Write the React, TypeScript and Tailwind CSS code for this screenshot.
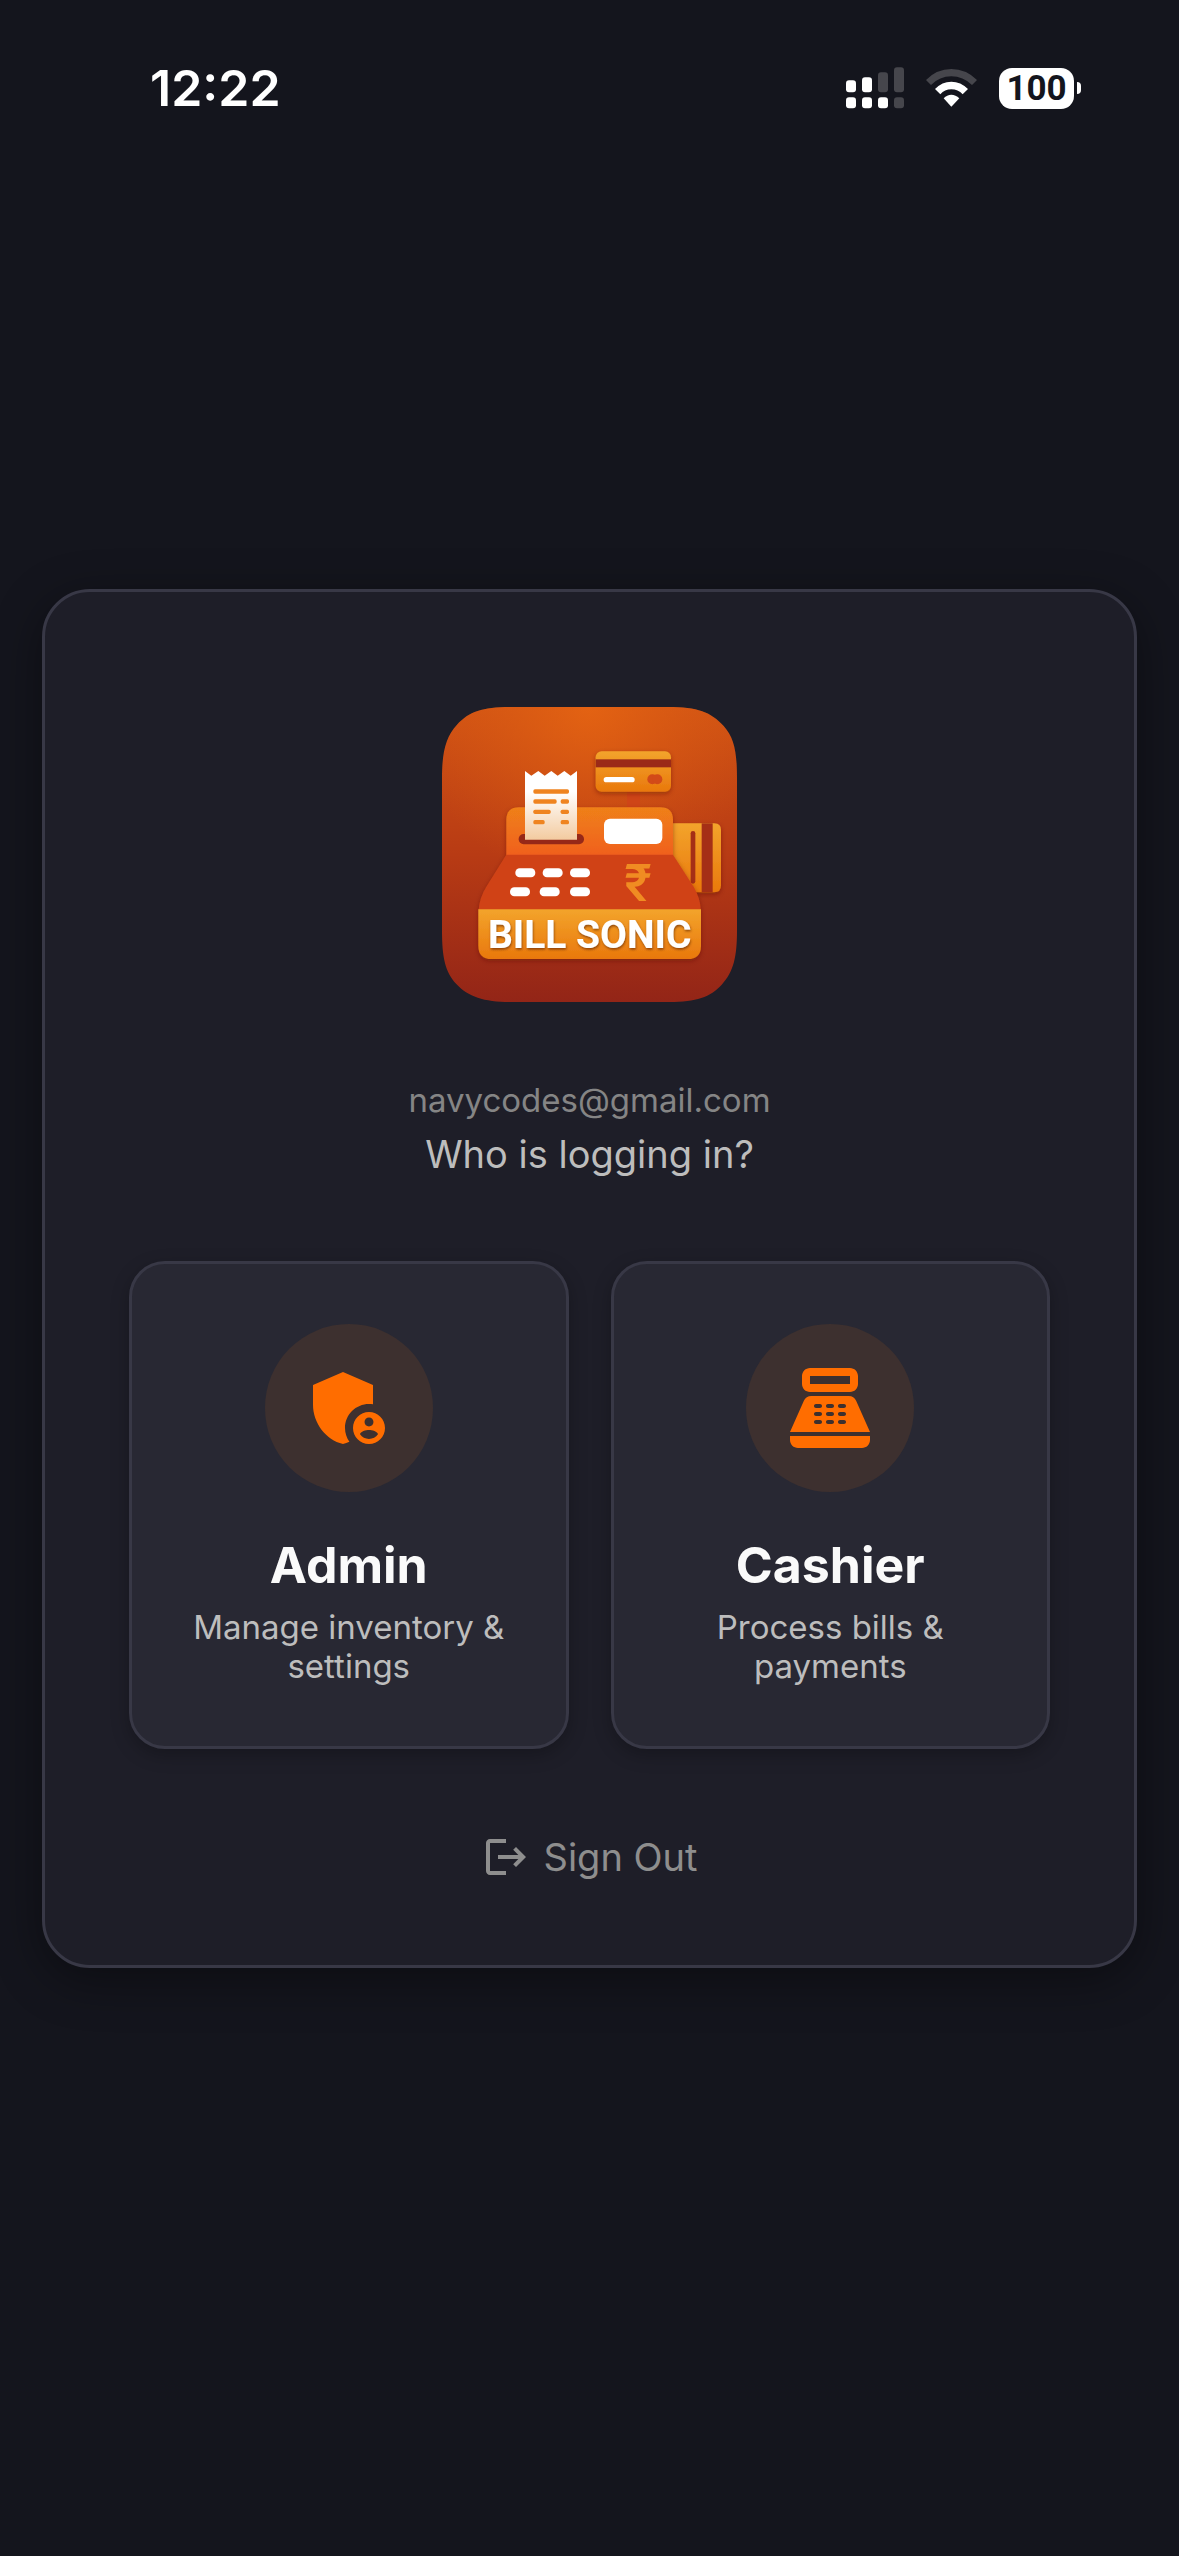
import type { IconType } from "react-icons";
import { MdAdminPanelSettings, MdLogout, MdPointOfSale } from "react-icons/md";

type Role = {
    id: string
    title: string
    description: string
    icon: IconType
}

const roles: Role[] = [
    { id: "admin", title: "Admin", description: "Manage inventory & settings", icon: MdAdminPanelSettings },
    { id: "cashier", title: "Cashier", description: "Process bills & payments", icon: MdPointOfSale },
]

const SignalIcon = () => (
    <svg width="58" height="42" viewBox="78 80 174 126" fill="#ffffff" aria-hidden="true">
        <rect x="78" y="120" width="30" height="36" rx="9" />
        <rect x="126" y="111" width="30" height="45" rx="9" />
        <rect x="174" y="96" width="30" height="60" rx="9" fill="#46464c" />
        <rect x="222" y="81" width="30" height="75" rx="9" fill="#46464c" />
        <rect x="78" y="171" width="30" height="33" rx="9" />
        <rect x="126" y="171" width="30" height="33" rx="9" />
        <rect x="174" y="171" width="30" height="33" rx="9" />
        <rect x="222" y="171" width="30" height="33" rx="9" fill="#46464c" />
    </svg>
)

const WifiIcon = () => (
    <svg width="51" height="42" viewBox="318 80 153 126" fill="#ffffff" aria-hidden="true">
        <path fill="#46464c" d="M318 119 Q350 86 394 86 Q438 86 471 119 L456 134 Q429 108 394 108 Q359 108 333 134 Z" />
        <path d="M345 146 Q366 124 394 124 Q422 124 444 146 L428 162 Q414 147 394 147 Q374 147 361 162 Z" />
        <path d="M371 174 Q381 163 394 163 Q407 163 418 174 L394 199 Z" />
    </svg>
)

const StatusBar = () => (
    <header className="flex h-44 items-center justify-between pl-[150px] pr-[98px]">
        <time className="text-[50px] leading-none font-semibold text-white">12:22</time>
        <div className="flex items-center gap-[22px]">
            <SignalIcon />
            <WifiIcon />
            <div className="flex items-center gap-[3px]">
                <span className="flex h-[41px] w-[75px] items-center justify-center rounded-[13px] bg-white font-['Roboto',sans-serif] text-[35px] leading-none font-bold text-[#14151d]">100</span>
                <span className="h-3 w-1 rounded-r-full bg-white"></span>
            </div>
        </div>
    </header>
)

const Logo = () => (
    <svg className="size-[295px]" viewBox="33 35 885 885" role="img" aria-label="Bill Sonic">
        <defs>
            <path id="shape" d="M240 35 H710 C800 35 840 50 878 92 C910 128 918 170 918 250 V705 C918 785 908 830 872 868 C838 905 795 920 715 920 H240 C160 920 112 905 76 866 C42 830 33 785 33 705 V250 C33 170 44 125 78 88 C115 48 155 35 240 35 Z" />
            <linearGradient id="tile" x1="0" y1="0" x2="0" y2="1">
                <stop offset="0" stopColor="#d25414" />
                <stop offset="0.5" stopColor="#b83b14" />
                <stop offset="1" stopColor="#932517" />
            </linearGradient>
            <radialGradient id="glow" cx="0.5" cy="0" r="0.6">
                <stop offset="0" stopColor="#e86612" stopOpacity="0.8" />
                <stop offset="1" stopColor="#d85a12" stopOpacity="0" />
            </radialGradient>
            <linearGradient id="amber" x1="0" y1="0" x2="0" y2="1">
                <stop offset="0" stopColor="#f3a42c" />
                <stop offset="1" stopColor="#e9780c" />
            </linearGradient>
            <linearGradient id="top" x1="0" y1="0" x2="0" y2="1">
                <stop offset="0" stopColor="#ef8019" />
                <stop offset="1" stopColor="#f0601c" />
            </linearGradient>
            <linearGradient id="paper" x1="0" y1="0" x2="0" y2="1">
                <stop offset="0.3" stopColor="#ffffff" />
                <stop offset="1" stopColor="#f3cba0" />
            </linearGradient>
            <filter id="soft" x="-20%" y="-20%" width="140%" height="150%">
                <feDropShadow dx="0" dy="6" stdDeviation="8" floodColor="#5a1408" floodOpacity="0.45" />
            </filter>
            <filter id="lift" x="-10%" y="-20%" width="120%" height="150%">
                <feDropShadow dx="2" dy="5" stdDeviation="3" floodColor="#6b2a05" floodOpacity="0.7" />
            </filter>
        </defs>

        <use href="#shape" fill="url(#tile)" />
        <use href="#shape" fill="url(#glow)" />

        {/* customer display on its pole */}
        <rect x="588" y="286" width="39" height="54" fill="#cf4517" />
        <g filter="url(#soft)">
            <rect x="494" y="168" width="226" height="121" rx="18" fill="url(#amber)" />
        </g>
        <rect x="494" y="192" width="226" height="24" fill="#9b2a18" />
        <rect x="518" y="245" width="93" height="16" rx="8" fill="#ffffff" />
        <circle cx="664" cy="252" r="15" fill="#d24a18" />
        <circle cx="679" cy="252" r="15" fill="#d24a18" />

        {/* card in the side reader */}
        <g filter="url(#soft)">
            <path fill="url(#amber)" d="M720 384 H850 Q870 384 870 404 V570 Q870 591 850 591 H720 Z" />
        </g>
        <rect x="812" y="384" width="33" height="207" fill="#a52f16" />
        <rect x="779" y="407" width="14" height="158" rx="7" fill="#a52f16" />

        {/* register body */}
        <g filter="url(#soft)">
            <path fill="url(#top)" d="M226 480 V374 Q226 336 264 336 H688 Q726 336 726 374 V480 Z" />
            <path fill="#d04317" d="M226 478 H726 L788 574 Q808 608 809 643 H143 Q146 606 166 574 Z" />
            <path fill="url(#amber)" d="M142 642 H810 V751 Q810 791 770 791 H182 Q142 791 142 751 Z" />
        </g>
        <rect x="519" y="370" width="175" height="76" rx="18" fill="#ffffff" />

        {/* receipt */}
        <rect x="263" y="416" width="196" height="31" rx="15" fill="#962818" />
        <path fill="url(#paper)" d="M282 433 V227 L301 241 L322 227 L341 241 L361 227 L380 241 L400 227 L419 241 L438 227 V433 Z" />
        <g fill="#ef8420">
            <rect x="307" y="282" width="107" height="13" rx="5" />
            <rect x="307" y="312" width="70" height="13" rx="5" />
            <rect x="389" y="312" width="25" height="13" rx="5" />
            <rect x="307" y="343" width="52" height="13" rx="5" />
            <rect x="389" y="343" width="25" height="13" rx="5" />
            <rect x="307" y="374" width="34" height="13" rx="5" />
            <rect x="389" y="374" width="25" height="13" rx="5" />
        </g>

        {/* keys */}
        <g fill="#ffffff">
            <rect x="253" y="519" width="60" height="27" rx="13" />
            <rect x="335" y="519" width="60" height="27" rx="13" />
            <rect x="417" y="519" width="60" height="27" rx="13" />
            <rect x="237" y="576" width="60" height="27" rx="13" />
            <rect x="326" y="576" width="60" height="27" rx="13" />
            <rect x="417" y="576" width="60" height="27" rx="13" />
        </g>
        <text x="621" y="618" textAnchor="middle" fontFamily="Roboto, sans-serif" fontSize="156" fontWeight="500" fill="#f08c22">₹</text>
        <text x="476" y="759" textAnchor="middle" fontFamily="Roboto, sans-serif" fontSize="117" fontWeight="700" fill="#ffffff" filter="url(#lift)">BILL SONIC</text>
    </svg>
)

const RoleCard = ({ title, description, icon: Icon }: Role) => (
    <button type="button" className="flex flex-1 flex-col items-center rounded-[36px] border-3 border-[#383846] bg-[#282833] px-9 py-15 shadow-[0_6px_18px_rgba(0,0,0,0.25)]">
        <span className="flex size-42 items-center justify-center rounded-full bg-[#3d302f]">
            <Icon className="size-24 text-[#ff6d00]" />
        </span>
        <span className="mt-10 text-[50px] leading-[66px] font-bold text-[#fafafa]">{title}</span>
        <span className="mt-[10px] text-[33px] leading-[39px] text-[#bdbdbd]">{description}</span>
    </button>
)

const App = () => {
    return (
        <div className="flex min-h-screen flex-col bg-[#14151d] font-['Inter','Noto_Sans',sans-serif]">
            <StatusBar />
            <main className="flex flex-1 items-center px-[42px] pb-44">
                <section className="flex w-full flex-col items-center rounded-[48px] border-3 border-[#383846] bg-[#1e1e28] px-21 pt-[115px] pb-21 shadow-[0_12px_48px_rgba(0,0,0,0.4)]">
                    <Logo />
                    <p className="mt-[78px] text-[33px] leading-10 text-[#858585]">navycodes@gmail.com</p>
                    <h1 className="mt-1.5 text-[38px] leading-14 text-[#bdbdbd]">Who is logging in?</h1>
                    <div className="mt-[79px] flex w-full gap-[42px]">
                        {roles.map((role) => <RoleCard key={role.id} {...role} />)}
                    </div>
                    <button type="button" className="mt-21 flex items-center gap-3.5 text-[38px] leading-12 text-[#8e8e8e]">
                        <MdLogout className="size-12" />
                        Sign Out
                    </button>
                </section>
            </main>
        </div>
    );
};

export default App;
